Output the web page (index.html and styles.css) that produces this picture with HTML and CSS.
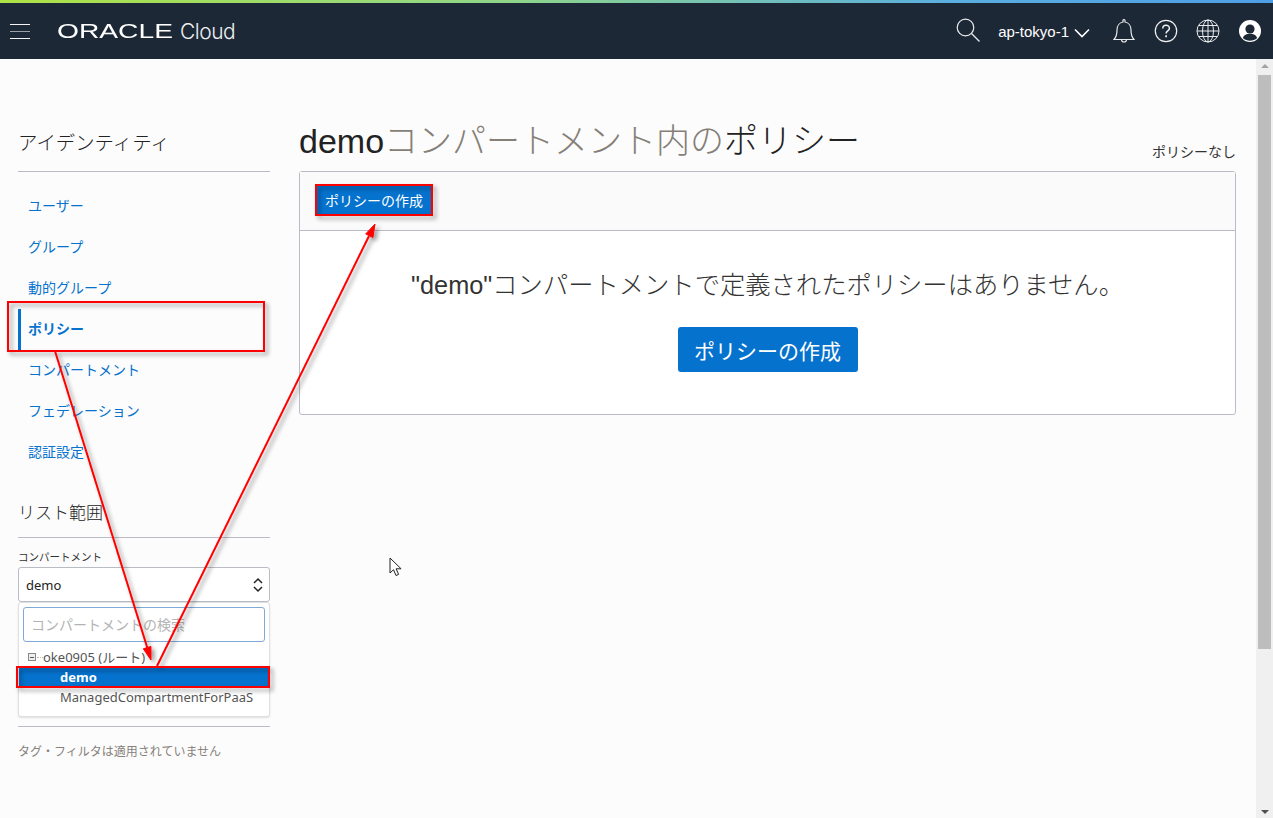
FILE: index.html
```html
<!DOCTYPE html>
<html lang="ja">
<head>
    <meta charset="UTF-8">
    <meta name="viewport" content="width=device-width, initial-scale=1.0">
    <title>ポリシー</title>
    <link rel="stylesheet" href="styles.css">
</head>

<body>

<div class="accent"></div>
<header class="topbar">
    <div class="burger"><span></span><span></span><span></span></div>
    <div class="logo"><span class="logo-oracle">ORACLE</span><span class="logo-cloud">Cloud</span></div>
    <div class="top-tools">
        <svg class="ico ico-search" width="24" height="24" viewBox="0 0 24 24" fill="none" stroke="#e8eaec" stroke-width="1.2"><circle cx="9.500" cy="9.500" r="8.300"/><path d="M15.500 15.500L23.500 23.500"/></svg>
        <span class="region">ap-tokyo-1</span>
        <svg class="ico ico-chevron" width="16" height="10" viewBox="0 0 16 10" fill="none" stroke="#fff" stroke-width="1.6"><path d="M1 1.500l7 7 7-7"/></svg>
        <svg class="ico ico-bell" width="22" height="26" viewBox="0 0 22 26" fill="none" stroke="#e8eaec" stroke-width="1.2"><path d="M1 21.500c2.500-2.500 3-4.500 3-9.500 0-4.500 2.800-7.500 6-8V2.500a1 1 0 0 1 2 0V4c3.200.5 6 3.500 6 8 0 5 .5 7 3 9.500z"/><path d="M8.500 21.500a2.500 2.500 0 0 0 5 0"/></svg>
        <svg class="ico ico-help" width="24" height="24" viewBox="0 0 24 24" fill="none" stroke="#f0f1f2" stroke-width="1.2"><circle cx="12" cy="12" r="10.700"/><path d="M8.800 9.500c0-4.200 6.600-4.200 6.600 0 0 2.400-3.300 2.500-3.300 5" stroke-width="1.500"/><path d="M12.100 16.300v1.900" stroke-width="1.700"/></svg>
        <svg class="ico ico-globe" width="24" height="24" viewBox="0 0 24 24" fill="none" stroke="#e8eaec" stroke-width="1"><circle cx="12" cy="12" r="11"/><ellipse cx="12" cy="12" rx="5.500" ry="11"/><path d="M12 1v22M1 12h22M2.500 6.500h19M2.500 17.500h19"/></svg>
        <svg class="ico ico-user" width="22" height="22" viewBox="0 0 22 22"><circle cx="11" cy="11" r="11" fill="#fff"/><circle cx="11" cy="9" r="4.600" fill="#1d2836"/><path d="M3.800 18c1.200-3.300 3.800-4.300 7.200-4.300s6 1 7.200 4.300c-3.800 3.500-10.600 3.500-14.400 0z" fill="#1d2836"/></svg>
    </div>
</header>

<div class="page">
    <div class="content">
        <aside class="sidebar">
            <h2 class="side-title">アイデンティティ</h2>
            <nav class="side-nav">
                <a href="#">ユーザー</a>
                <a href="#">グループ</a>
                <a href="#">動的グループ</a>
                <a href="#" class="active">ポリシー</a>
                <a href="#">コンパートメント</a>
                <a href="#">フェデレーション</a>
                <a href="#">認証設定</a>
            </nav>
            <h2 class="side-title scope-title">リスト範囲</h2>
            <div class="field-label">コンパートメント</div>
            <div class="select">
                <span>demo</span>
                <svg width="10" height="16" viewBox="0 0 10 16" fill="none" stroke="#222" stroke-width="1.500"><path d="M1 6l4-4 4 4M1 10l4 4 4-4"/></svg>
            </div>
            <div class="dropdown">
                <div class="search-box">コンパートメントの検索</div>
                <div class="tree-row tree-root"><span class="tree-toggle"></span><span class="tree-dots"></span>oke0905 (ルート)</div>
                <div class="tree-row tree-child selected">demo</div>
                <div class="tree-row tree-child">ManagedCompartmentForPaaS</div>
            </div>
            <p class="tag-note">タグ・フィルタは適用されていません</p>
        </aside>

        <main class="main">
            <div class="main-head">
                <h1><span class="name">demo</span><span class="muted">コンパートメント内の</span>ポリシー</h1>
                <span class="count">ポリシーなし</span>
            </div>
            <section class="panel">
                <div class="panel-bar"><button class="btn btn-small">ポリシーの作成</button></div>
                <div class="panel-empty">
                    <p>"demo"コンパートメントで定義されたポリシーはありません。</p>
                    <button class="btn btn-big">ポリシーの作成</button>
                </div>
            </section>
        </main>
    </div>
    <div class="scrollbar">
        <div class="arrow-up"></div>
        <div class="thumb"></div>
        <div class="arrow-down"></div>
    </div>

    <!-- 説明用の赤い注釈 -->
    <svg class="notes" width="1273" height="759" viewBox="0 0 1273 759" fill="none">
        <defs>
            <filter id="sh" x="-10%" y="-10%" width="120%" height="120%"><feDropShadow dx="3" dy="3" stdDeviation="2" flood-color="#000" flood-opacity=".4"/></filter>
        </defs>
        <g filter="url(#sh)" stroke="#f00" stroke-width="2" transform="translate(0 -59)">
            <path d="M55 351L148 650"/>
            <path d="M157 666L369 236"/>
            <path d="M151 660L150.900 646.400 143.300 648.800z" fill="#f00" stroke="#f00" stroke-width="1"/>
            <path d="M375 224L372.900 237.500 365.700 233.900z" fill="#f00" stroke="#f00" stroke-width="1"/>
            <rect x="8" y="302" width="256" height="49"/>
            <rect x="316" y="185" width="116" height="30"/>
            <rect x="17" y="667" width="252" height="20"/>
        </g>
    </svg>

    <svg class="cursor" width="14" height="20" viewBox="0 0 14 20"><path d="M1 1v15l3.500-3.300 2.500 5.800 2.600-1.100-2.500-5.600h5z" fill="#fff" stroke="#222" stroke-width="1"/></svg>
</div>

</body>
</html>
```

FILE: styles.css
```css
* {
    box-sizing: border-box;
}
html, body {
    margin: 0;
    height: 818px;
    overflow: hidden;
}
body {
    font-family: "Liberation Sans", "Noto Sans CJK JP", sans-serif;
    background-color: #fcfcfc;
    color: #222;
}

.accent {
    height: 3px;
    background: linear-gradient(90deg, #aee345 0%, #8fd58a 40%, #5aaee0 75%, #4f9fe6 100%);
}
.topbar {
    height: 56px;
    background-color: #1d2836;
    display: flex;
    align-items: center;
    color: #fff;
}
.burger {
    width: 20px;
    margin-left: 10px;
    display: flex;
    flex-direction: column;
    gap: 6px;
}
.burger span {
    height: 1px;
    background-color: #f2f2f2;
}
.burger span:nth-child(2) {
    background-color: #9a9fa5;
}
.logo {
    margin-left: 27px;
    display: flex;
    align-items: center;
}
.logo-oracle {
    display: inline-block;
    width: 123px;
    font-size: 20px;
    transform: scaleX(1.41);
    transform-origin: left center;
    white-space: nowrap;
}
.logo-cloud {
    font-family: "Inter", "Liberation Sans", sans-serif;
    font-weight: 300;
    font-size: 21px;
    letter-spacing: -.5px;
    color: #eef0f2;
}
.top-tools {
    margin-left: auto;
    margin-right: 12px;
    display: flex;
    align-items: center;
}
.ico {
    display: block;
    flex: none;
}
.ico-search {
    margin-right: 18px;
    margin-top: -2px;
}
.region {
    font-size: 15px;
}
.ico-chevron {
    margin-left: 5px;
    margin-top: 3px;
}
.ico-bell {
    margin-left: 23px;
}
.ico-help {
    margin-left: 19px;
}
.ico-globe {
    margin-left: 18px;
}
.ico-user {
    margin-left: 19px;
}

.page {
    position: relative;
    display: flex;
    height: 759px;
}
.content {
    flex: 1;
    display: flex;
    padding: 0 20px 0 18px;
}

.sidebar {
    width: 252px;
    flex: none;
}
.side-title {
    margin: 0;
    padding-top: 71px;
    height: 113px;
    font-size: 19.400px;
    line-height: 26px;
    font-weight: 300;
    color: #222;
    border-bottom: 1px solid #b9bcc4;
}
.side-nav {
    display: flex;
    flex-direction: column;
    padding-top: 14px;
}
.side-nav a {
    height: 41px;
    line-height: 41px;
    padding-left: 10px;
    font-size: 14px;
    color: #0572ce;
    text-decoration: none;
}
.side-nav a.active {
    font-weight: 700;
    border-left: 3px solid #0572ce;
    padding-left: 7px;
}
.side-title.scope-title {
    padding-top: 0;
    height: 37px;
    margin-top: 28px;
    font-size: 17px;
}
.field-label {
    margin-top: 11px;
    font-size: 10.500px;
    line-height: 16px;
    color: #333;
}
.select {
    height: 35px;
    margin-top: 2px;
    border: 1px solid #b9bcc4;
    border-radius: 3px;
    background-color: #fff;
    display: flex;
    align-items: center;
    justify-content: space-between;
    padding: 0 6px 0 7px;
    font-family: "Noto Sans", "Noto Sans CJK JP", sans-serif;
    font-size: 13px;
}
.dropdown {
    height: 115px;
    border: 1px solid #dfe0e3;
    border-radius: 3px;
    background-color: #fff;
    box-shadow: 0 1px 2px rgba(0, 0, 0, .12);
    font-family: "Noto Sans", "Noto Sans CJK JP", sans-serif;
    font-size: 13px;
    color: #555;
    padding-top: 4px;
}
.search-box {
    height: 35px;
    margin: 0 4px 5px;
    border: 1px solid #7ea9d8;
    border-radius: 3px;
    padding-left: 7px;
    line-height: 33px;
    font-size: 14px;
    color: #b4b4b4;
}
.tree-row {
    height: 20px;
    line-height: 20px;
    white-space: nowrap;
}
.tree-root {
    display: flex;
    align-items: center;
    padding-left: 9px;
}
.tree-toggle {
    width: 8px;
    height: 8px;
    border: 1px solid #888;
    background: linear-gradient(#555, #555) center / 4px 1px no-repeat #eee;
}
.tree-dots {
    width: 6px;
    margin: 0 0 0 1px;
    border-top: 1px dotted #bbb;
}
.tree-child {
    padding-left: 41px;
}
.tree-child.selected {
    background-color: #0572ce;
    color: #fff;
    font-weight: 700;
}
.tag-note {
    margin: 9px 0 0;
    padding-top: 16px;
    border-top: 1px solid #b9bcc4;
    font-size: 12px;
    line-height: 18px;
    color: #86817a;
}

.main {
    flex: 1;
    margin-left: 29px;
}
.main-head {
    height: 112px;
    display: flex;
    align-items: flex-end;
    justify-content: space-between;
    padding-bottom: 10px;
}
.main-head h1 {
    margin: 0 0 -3px;
    font-size: 34px;
    line-height: 46px;
    font-weight: 300;
    color: #222;
}
.main-head .muted {
    color: #857f77;
}
.count {
    font-size: 14px;
    color: #333;
}
.panel {
    height: 244px;
    border: 1px solid #b9bcc4;
    border-radius: 3px;
    background-color: #fff;
}
.panel-bar {
    height: 59px;
    background-color: #fafafa;
    border-bottom: 1px solid #b9bcc4;
    padding: 13px 0 0 16px;
}
.btn {
    display: block;
    border: none;
    color: #fff;
    background-color: #0572ce;
    font-family: inherit;
    cursor: pointer;
}
.btn-small {
    width: 116px;
    height: 30px;
    padding: 0;
    font-size: 14px;
}
.btn-big {
    width: 180px;
    height: 45px;
    margin: 0 auto;
    padding: 0;
    font-size: 21px;
    border-radius: 3px;
}
.panel-empty {
    text-align: center;
    padding-top: 37px;
}
.panel-empty p {
    margin: 0 0 25px;
    font-size: 25.300px;
    font-weight: 300;
    line-height: 34px;
    color: #333;
    white-space: nowrap;
}

.scrollbar {
    width: 17px;
    flex: none;
    background-color: #f0f0f0;
    display: flex;
    flex-direction: column;
    align-items: center;
    position: relative;
}
.arrow-up {
    margin-top: 5px;
    border-left: 4px solid transparent;
    border-right: 4px solid transparent;
    border-bottom: 4px solid #a3a3a3;
}
.thumb {
    width: 13px;
    height: 574px;
    margin-top: 7px;
    background-color: #bdbdbd;
}
.arrow-down {
    margin-top: auto;
    margin-bottom: 4px;
    border-left: 4px solid transparent;
    border-right: 4px solid transparent;
    border-top: 4px solid #505050;
}

.notes {
    position: absolute;
    left: 0;
    top: 0;
    pointer-events: none;
}
.cursor {
    position: absolute;
    left: 389px;
    top: 498px;
}
```
